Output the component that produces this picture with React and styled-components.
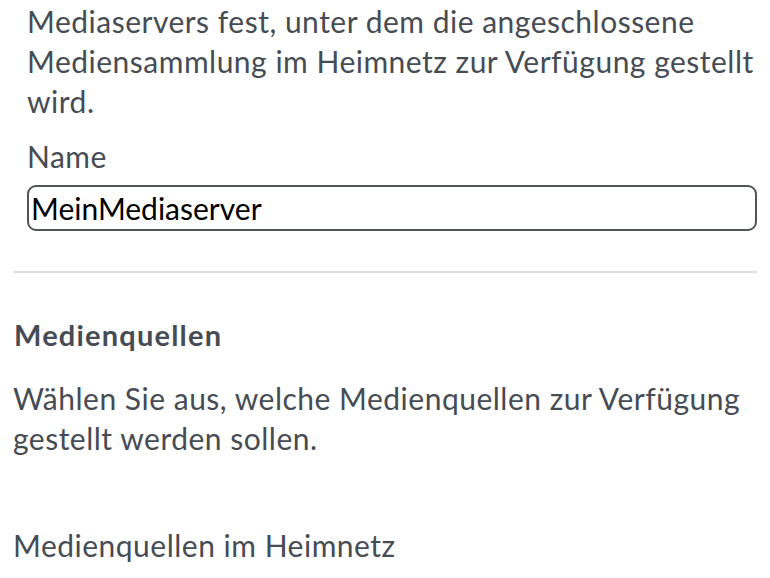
import React from 'react';
import styled, { createGlobalStyle } from 'styled-components';

const GlobalStyle = createGlobalStyle`
  body {
    margin: 0;
    background: #fff;
    font-family: Lato, "Open Sans", sans-serif;
    color: #464c53;
  }
`;

const Page = styled.div`
  padding: 1px 13px 0;
`;

const Indented = styled.div`
  padding-left: 14px;
`;

const Text = styled.p`
  margin: 0;
  font-size: 30px;
  line-height: 40px;
  letter-spacing: 0.5px;
  white-space: nowrap;
`;

const Label = styled.label`
  display: block;
  margin-top: 15px;
  font-size: 30px;
  line-height: 40px;
  letter-spacing: 0.5px;
`;

const Input = styled.input`
  display: block;
  box-sizing: border-box;
  width: 100%;
  height: 46px;
  margin-top: 9px;
  padding: 0 2px;
  border: 2px solid #505357;
  border-radius: 9px;
  background: #fff;
  font-family: Lato, "Open Sans", sans-serif;
  font-size: 30px;
  color: #000;
  outline: none;
`;

const Divider = styled.hr`
  margin: 40px 0 0;
  border: 0;
  border-top: 2px solid #dcdcdc;
`;

const SectionTitle = styled.h2`
  margin: 42px 1px 0;
  font-size: 29px;
  line-height: 40px;
  font-weight: 700;
  letter-spacing: 1.2px;
`;

const SectionText = styled(Text)`
  margin-top: 23px;
`;

const SubLabel = styled(Text)`
  margin-top: 67px;
`;

export default function App() {
  return (
    <Page>
      <GlobalStyle />
      <Indented>
        <Text>
          Mediaservers fest, unter dem die angeschlossene
          <br />
          Mediensammlung im Heimnetz zur Verfügung gestellt
          <br />
          wird.
        </Text>
        <Label htmlFor="server-name">Name</Label>
        <Input id="server-name" defaultValue="MeinMediaserver" />
      </Indented>
      <Divider />
      <SectionTitle>Medienquellen</SectionTitle>
      <SectionText>
        Wählen Sie aus, welche Medienquellen zur Verfügung
        <br />
        gestellt werden sollen.
      </SectionText>
      <SubLabel>Medienquellen im Heimnetz</SubLabel>
    </Page>
  );
}
